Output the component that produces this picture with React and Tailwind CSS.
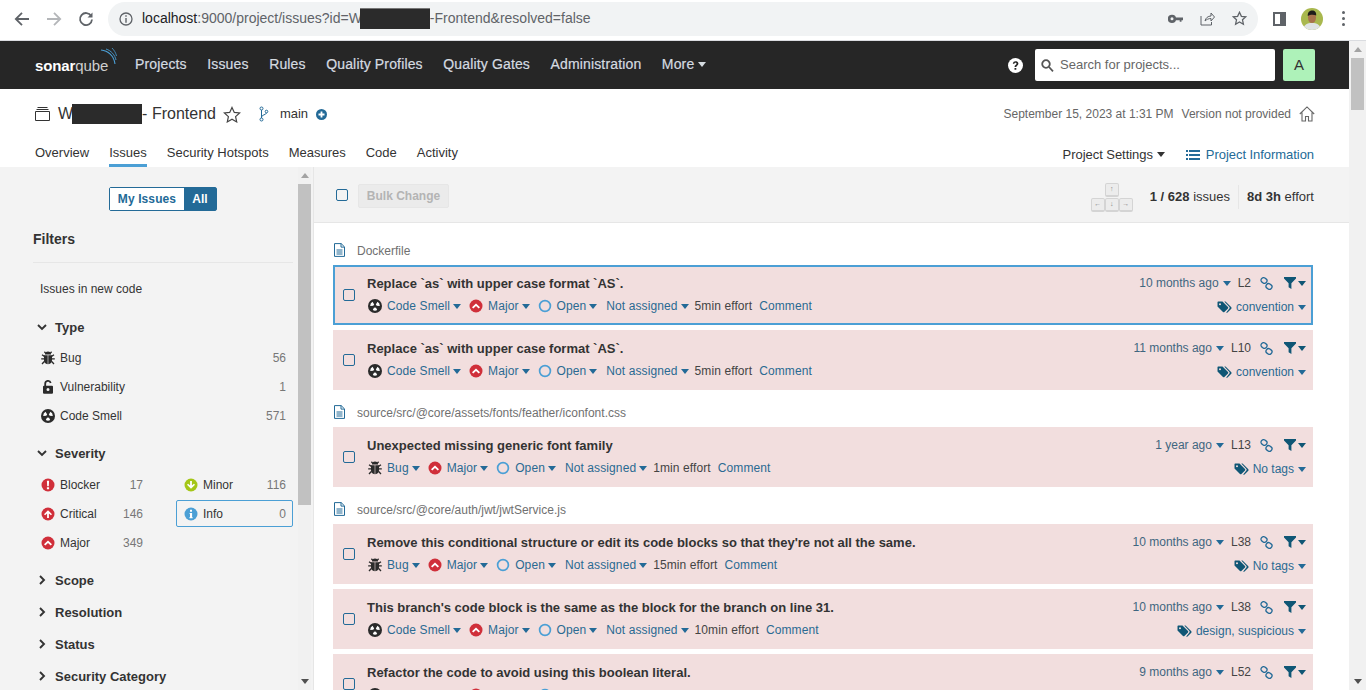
import React from 'react';

const font = { fontFamily: '"Liberation Sans", Arial, sans-serif' };

function Caret({ className = 'text-[#236a97]' }) {
  return (
    <svg width="8" height="5" viewBox="0 0 8 5" className={`shrink-0 ${className}`}>
      <path d="M0 0h8L4 5z" fill="currentColor" />
    </svg>
  );
}

function BugIcon({ size = 14 }) {
  return (
    <svg width={size} height={size} viewBox="0 0 14 14" className="shrink-0">
      <g fill="#2b2b2b">
        <path d="M4 3.600a3 3 0 0 1 6 0z" />
        <path d="M3 4.200h3.700v9C4.400 12.900 3 11.400 3 9.200zM7.300 4.200H11v5c0 2.200-1.400 3.700-3.700 4z" />
      </g>
      <g stroke="#2b2b2b" strokeWidth="1.300" fill="none">
        <path d="M3.400.8l1.600 1.800M10.600.8L9 2.600M3.400 5.400L1 3.800M10.600 5.400L13 3.800M3.200 7.800H.2M10.800 7.800h3M3.600 10.200L1 13M10.400 10.200L13 13" />
      </g>
    </svg>
  );
}

function LockIcon() {
  return (
    <svg width="14" height="14" viewBox="0 0 14 14" className="shrink-0">
      <path d="M4.200 6.500V3.800a2.800 2.800 0 0 1 5.500-.8" stroke="#2b2b2b" strokeWidth="1.800" fill="none" />
      <path fillRule="evenodd" d="M3 5.800h8a1 1 0 0 1 1 1v6a1 1 0 0 1-1 1H3a1 1 0 0 1-1-1v-6a1 1 0 0 1 1-1zm4 2.200a1.500 1.500 0 1 0 0 3 1.500 1.500 0 0 0 0-3z" fill="#2b2b2b" />
    </svg>
  );
}

function SmellIcon() {
  return (
    <svg width="14" height="14" viewBox="0 0 14 14" className="shrink-0">
      <circle cx="7" cy="7" r="7" fill="#2b2b2b" />
      <g transform="rotate(180 7 7)">
        <path d="M5.400 7.200L2.200 6.900a4.900 4.900 0 0 0 2.300 4.300l1.700-2.700a1.800 1.800 0 0 1-.8-1.300z" fill="#fff" />
        <path d="M8.600 7.200l3.200-.3a4.900 4.900 0 0 1-2.300 4.300L7.800 8.500a1.800 1.800 0 0 0 .8-1.300z" fill="#fff" />
        <path d="M4.800 2.900a4.800 4.800 0 0 1 4.400 0L7.900 5.600a2 2 0 0 0-1.800 0z" fill="#fff" />
      </g>
    </svg>
  );
}

function MajorIcon() {
  return (
    <svg width="14" height="14" viewBox="0 0 14 14" className="shrink-0">
      <circle cx="7" cy="7" r="6.500" fill="#d02f3a" />
      <path d="M3 8.200L7 4.400l4 3.800-1.300 1.300L7 7 4.300 9.500z" fill="#fff" />
    </svg>
  );
}

function CriticalIcon() {
  return (
    <svg width="14" height="14" viewBox="0 0 14 14" className="shrink-0">
      <circle cx="7" cy="7" r="6.500" fill="#d02f3a" />
      <path d="M7 3.200l4 4-1.100 1.100-2-1.900V11H6.100V6.400l-2 1.900L3 7.200z" fill="#fff" />
    </svg>
  );
}

function BlockerIcon() {
  return (
    <svg width="14" height="14" viewBox="0 0 14 14" className="shrink-0">
      <circle cx="7" cy="7" r="6.500" fill="#d02f3a" />
      <path d="M5.900 2.800h2.200L7.800 8.200H6.200zM5.900 9.300h2.200v2H5.900z" fill="#fff" />
    </svg>
  );
}

function MinorIcon() {
  return (
    <svg width="14" height="14" viewBox="0 0 14 14" className="shrink-0">
      <circle cx="7" cy="7" r="6.500" fill="#a4c617" />
      <path d="M7 10.800l-4-4 1.100-1.100 2 1.900V3h1.800v4.600l2-1.900L11 6.800z" fill="#fff" />
    </svg>
  );
}

function InfoIcon() {
  return (
    <svg width="14" height="14" viewBox="0 0 14 14" className="shrink-0">
      <circle cx="7" cy="7" r="6.500" fill="#4b9fd5" />
      <path d="M6 2.800h2v1.900H6zM5.600 6h2.500v4.200h.6v1.100H5.400v-1.100H6V7.100h-.4z" fill="#fff" />
    </svg>
  );
}

function OpenIcon() {
  return (
    <svg width="14" height="14" viewBox="0 0 14 14" className="shrink-0">
      <circle cx="7" cy="7" r="5.400" stroke="#4b9fd5" strokeWidth="1.700" fill="none" />
    </svg>
  );
}

function TypeIcon({ type }) {
  return type === 'Bug' ? <BugIcon /> : <SmellIcon />;
}

function LinkIcon() {
  return (
    <svg width="13" height="13" viewBox="0 0 13 13" className="shrink-0">
      <g stroke="#236a97" strokeWidth="1.300" fill="none">
        <rect x="1" y="1" width="6" height="5" rx="2.300" transform="rotate(35 4 3.500)" />
        <rect x="6" y="7" width="6" height="5" rx="2.300" transform="rotate(35 9 9.500)" />
      </g>
    </svg>
  );
}

function FilterIcon() {
  return (
    <svg width="12" height="12" viewBox="0 0 12 12" className="shrink-0">
      <path d="M0 0h12v1.400L7.400 6.200V12L4.600 10.300V6.200L0 1.400z" fill="#0f5675" />
    </svg>
  );
}

function TagIcon() {
  return (
    <svg width="15" height="13" viewBox="0 0 15 13" className="shrink-0">
      <path fillRule="evenodd" d="M.5 1.200A.7.700 0 0 1 1.200.5h4.300L11 6c.4.4.4 1 0 1.400L7.400 11c-.4.4-1 .4-1.400 0L.5 5.500zM3 2.200a1 1 0 1 0 0 2 1 1 0 0 0 0-2z" fill="#0f5675" />
      <path d="M7.300.5h1.200l5.800 5.800c.4.4.4 1 0 1.400l-3.800 3.800c-.4.4-.9.4-1.300.1L12.400 7.500c.4-.4.4-1 0-1.400z" fill="#0f5675" />
    </svg>
  );
}

function FileIcon() {
  return (
    <svg width="13" height="14" viewBox="0 0 13 14" className="shrink-0">
      <path d="M1.500.6h6.700l3.300 3.300v9.500H1.500z M8 .6v3.500h3.500 M3.500 7h6 M3.500 9h6 M3.500 11h6" stroke="#236a97" strokeWidth="1" fill="none" />
    </svg>
  );
}

function Chevron({ open }) {
  return (
    <svg width="10" height="10" viewBox="0 0 10 10" className="shrink-0">
      {open
        ? <path d="M1 3l4 4 4-4" stroke="#333" strokeWidth="1.900" fill="none" />
        : <path d="M3 1l4 4-4 4" stroke="#333" strokeWidth="1.900" fill="none" />}
    </svg>
  );
}

function Checkbox() {
  return <div className="w-[12px] h-[12px] shrink-0 border border-[#236a97] rounded-[2px]" />;
}

function Meta({ icon, label, className = '' }) {
  return (
    <span className={`flex items-center ${className}`}>
      {icon && <span className="mr-[5px] flex">{icon}</span>}
      <span className="text-[#2a6a92]">{label}</span>
      <span className="ml-[3px] flex"><Caret /></span>
    </span>
  );
}

function IssueBox({ issue }) {
  const { title, type, open = 'Open', effort, age, line, tags, selected } = issue;
  return (
    <div className={`h-[60px] mb-[5px] bg-[#f2dede] border-2 flex items-center pl-[8px] pr-[5px] ${selected ? 'border-[#4b9fd5]' : 'border-[#f2dede]'}`}>
      <Checkbox />
      <div className="ml-[12px] flex-1 min-w-0">
        <div className="h-[20px] leading-[20px] text-[13px] font-bold text-[#333]">{title}</div>
        <div className="h-[20px] mt-[2px] pl-[1px] flex items-center gap-[8px] text-[12px] tracking-[0.1px]">
          <Meta icon={<TypeIcon type={type} />} label={type} />
          <Meta icon={<MajorIcon />} label="Major" />
          <Meta icon={<OpenIcon />} label={open} />
          <Meta label="Not assigned" className="ml-[1px]" />
          <span className="text-[#444] -ml-[2px]">{effort} effort</span>
          <span className="text-[#2a6a92] -ml-[1px]">Comment</span>
        </div>
      </div>
      <div className="text-[12px] flex flex-col items-end">
        <div className="h-[20px] flex items-center">
          <span className="text-[#3f6680]">{age}</span>
          <span className="ml-[4px] flex"><Caret /></span>
          <span className="ml-[7px] mr-[9px] text-[#444]">{line}</span>
          <LinkIcon />
          <span className="ml-[11px] flex"><FilterIcon /></span>
          <span className="ml-[2px] flex"><Caret className="text-[#0f5675]" /></span>
        </div>
        <div className="h-[20px] mt-[4px] flex items-center">
          <TagIcon />
          <span className="ml-[4px] text-[#2a6a92]">{tags}</span>
          <span className="ml-[4px] flex"><Caret /></span>
        </div>
      </div>
    </div>
  );
}

function FilePath({ path, first }) {
  return (
    <div className={`h-[18px] mb-[6px] flex items-center gap-[11px] text-[12px] text-[#707070] ${first ? '' : 'mt-[13px]'}`}>
      <FileIcon />
      <span className="pt-[1px]">{path}</span>
    </div>
  );
}

function FacetHeader({ label, open, className }) {
  return (
    <div className={`h-[24px] flex items-center pl-[37px] text-[13px] font-bold text-[#333] ${className}`}>
      <Chevron open={open} />
      <span className="ml-[8px] pt-[1px]">{label}</span>
    </div>
  );
}

function FacetRow({ icon, label, count, highlighted }) {
  return (
    <div className={`h-[29px] flex items-center justify-between text-[12px] pl-[8px] pr-[7px] ${highlighted ? 'relative' : ''}`}>
      {highlighted && <div className="absolute left-0 right-0 top-[1px] bottom-[1px] border border-[#4b9fd5] rounded-[2px]" />}
      <span className="flex items-center gap-[5px] text-[#333]">{icon}{label}</span>
      <span className="text-[#777]">{count}</span>
    </div>
  );
}

function Scrollbar({ thumbTop, thumbHeight, width = 'w-[13px]', thumbClass = 'w-full' }) {
  return (
    <div className={`${width} shrink-0 h-full flex flex-col items-center bg-[#f1f1f1] relative`}>
      <svg width="8" height="5" viewBox="0 0 8 5" className="absolute top-[6px]"><path d="M0 5h8L4 0z" fill="#a3a3a3" /></svg>
      <div className={`absolute bg-[#c1c1c1] ${thumbClass}`} style={{ top: thumbTop, height: thumbHeight }} />
      <svg width="8" height="5" viewBox="0 0 8 5" className="absolute bottom-[6px]"><path d="M0 0h8L4 5z" fill="#505050" /></svg>
    </div>
  );
}

function ChromeBar() {
  return (
    <div className="h-[41px] bg-white border-b border-[#dadce0] flex items-center pb-[3px]">
      <div className="w-[108px] flex items-center shrink-0">
        <svg width="16" height="16" viewBox="0 0 16 16" className="ml-[14px]"><path d="M15 8H2.500M8 1.800L1.800 8 8 14.200" stroke="#5f6368" strokeWidth="1.800" fill="none" /></svg>
        <svg width="16" height="16" viewBox="0 0 16 16" className="ml-[16px]"><path d="M1 8h12.500M8 1.800L14.200 8 8 14.200" stroke="#b4b6b9" strokeWidth="1.800" fill="none" /></svg>
        <svg width="16" height="16" viewBox="0 0 16 16" className="ml-[16px]"><path d="M13.200 5A6 6 0 1 0 14 8.500" stroke="#5f6368" strokeWidth="1.800" fill="none" /><path d="M14.500 1.500V6.500H9.500z" fill="#5f6368" /></svg>
      </div>
      <div className="w-[1150px] h-[34px] rounded-full bg-[#f1f3f4] flex items-center pl-[11px] pr-[11px] shrink-0">
        <svg width="14" height="14" viewBox="0 0 14 14" className="shrink-0">
          <circle cx="7" cy="7" r="6" stroke="#5f6368" strokeWidth="1.300" fill="none" />
          <path d="M6.300 3.300h1.400v1.400H6.300zM6.300 6h1.400v4.700H6.300z" fill="#5f6368" />
        </svg>
        <div className="ml-[9px] flex items-center text-[14px] text-[#5f6368] whitespace-nowrap flex-1">
          <span className="text-[#202124]">localhost</span>:9000/project/issues?id=W
          <span className="inline-block w-[70px] h-[21px] bg-[#2b2b2b] border-t border-[#777] -ml-[2px]" />
          -Frontend&amp;resolved=false
        </div>
        <div className="flex items-center gap-[17px]">
          <svg width="15" height="10" viewBox="0 0 15 10">
            <path fillRule="evenodd" d="M4 .8a4 4 0 1 1-.1 8.200 4 4 0 0 1 .1-8.200zm0 2.500a1.500 1.500 0 1 0 0 3 1.500 1.500 0 0 0 0-3z" fill="#5f6368" />
            <path d="M7 3.500h8v2.800h-1.500v1.500h-1.800V6.300H7z" fill="#5f6368" />
          </svg>
          <svg width="15" height="15" viewBox="0 0 15 15" fill="none" stroke="#5f6368" strokeWidth="1">
            <path d="M1 5v9h10.500v-3M5 10c.5-3 3-5 6-5V2l3.500 4-3.500 4V7.500c-2.500 0-4.500 1-6 2.500z" />
          </svg>
          <svg width="15" height="15" viewBox="0 0 15 15" fill="none" stroke="#5f6368" strokeWidth="1.300">
            <path d="M7.500 1.300l1.900 4 4.400.5-3.300 3 .9 4.400-3.900-2.200-3.900 2.200.9-4.400-3.300-3 4.400-.5z" />
          </svg>
        </div>
      </div>
      <div className="flex-1 flex items-center">
        <div className="ml-[15px] w-[13px] h-[14px] border-2 border-[#5f6368] border-r-[6px]" />
        <svg width="22" height="22" viewBox="0 0 22 22" className="ml-[15px]">
          <defs><clipPath id="av"><circle cx="11" cy="11" r="11" /></clipPath></defs>
          <g clipPath="url(#av)">
            <rect width="22" height="22" fill="#a9b84e" />
            <path d="M2 23c0-6 4-8 9-8s9 2 9 8z" fill="#dfe3e4" />
            <ellipse cx="11" cy="9.500" rx="4" ry="5.500" fill="#a8724d" />
            <path d="M6.800 8c-.3-4 2-5.500 4.500-5.500S15.500 4 15.200 7.500C13 6.500 9 6.500 6.800 8z" fill="#1f1c1a" />
          </g>
        </svg>
        <div className="ml-[19px] flex flex-col gap-[3px]">
          <div className="w-[3px] h-[3px] rounded-full bg-[#5f6368]" />
          <div className="w-[3px] h-[3px] rounded-full bg-[#5f6368]" />
          <div className="w-[3px] h-[3px] rounded-full bg-[#5f6368]" />
        </div>
      </div>
    </div>
  );
}

function NavBar() {
  const links = ['Projects', 'Issues', 'Rules', 'Quality Profiles', 'Quality Gates', 'Administration'];
  return (
    <div className="h-[48px] bg-[#262626] flex items-center pl-[35px] pr-[34px]">
      <div className="w-[100px] shrink-0 flex items-center relative pt-[2px]">
        <span className="text-[15px] font-bold text-white tracking-[-0.1px]">sonar</span>
        <span className="text-[15px] text-[#cfcfcf] tracking-[-0.1px]">qube</span>
        <svg width="20" height="20" viewBox="0 0 20 20" className="absolute left-[65px] -top-[6px]" fill="none" stroke="#4b9fd5">
          <path d="M1 3c7 .5 13 6 14 14" strokeWidth="1.100" />
          <path d="M6 2c5 1.500 9 6 10 11" strokeWidth="0.900" />
          <path d="M12 1c2 2 4 5 4.500 8" strokeWidth="0.800" />
        </svg>
      </div>
      <div className="flex items-center gap-[20.5px] pb-[1px] text-[14px] tracking-[0.15px] text-[#d5dbe0] whitespace-nowrap [-webkit-text-stroke:0.2px_#d5dbe0]">
        {links.map(l => <span key={l}>{l}</span>)}
        <span className="flex items-center gap-[4px]">More <Caret className="text-[#d5dbe0]" /></span>
      </div>
      <div className="ml-auto flex items-center">
        <svg width="15" height="15" viewBox="0 0 15 15">
          <circle cx="7.500" cy="7.500" r="7.500" fill="#fff" />
          <path d="M4.800 5.700C5 4 6.200 3.200 7.600 3.200c1.600 0 2.800 1 2.800 2.400 0 2-2.100 2.100-2.100 3.500H6.500c0-2.200 2-2.300 2-3.400 0-.6-.4-1-1-1-.7 0-1 .4-1.100 1zM6.500 9.900h1.800v1.800H6.500z" fill="#262626" />
        </svg>
        <div className="ml-[12px] w-[240px] h-[32px] bg-white rounded-[2px] flex items-center pl-[6px] text-[13px] text-[#666]">
          <svg width="13" height="13" viewBox="0 0 13 13" fill="none" stroke="#555" strokeWidth="1.800" className="mr-[6px]">
            <circle cx="5" cy="5" r="3.800" />
            <path d="M8 8l4 4.300" />
          </svg>
          Search for projects...
        </div>
        <div className="ml-[8px] w-[32px] h-[32px] rounded-[2px] bg-[#aef2b9] flex items-center justify-center text-[15px] text-[#333]">A</div>
      </div>
    </div>
  );
}

function ProjectHeader() {
  const tabs = ['Overview', 'Issues', 'Security Hotspots', 'Measures', 'Code', 'Activity'];
  return (
    <div className="h-[78px] bg-white pl-[35px] pr-[34px] relative">
      <div className="h-[50px] flex items-center">
        <svg width="15" height="14" viewBox="0 0 15 14" fill="none" stroke="#333" strokeWidth="1">
          <path d="M2.500.5h10M1.500 2.500h12M.5 4.500h14v9H.5z" />
        </svg>
        <span className="ml-[8px] text-[16px] text-[#333] whitespace-nowrap flex items-center">
          W<span className="inline-block w-[70px] h-[20px] bg-[#2b2b2b] -ml-[1px]" />- Frontend
        </span>
        <svg width="18" height="17" viewBox="0 0 18 17" fill="none" stroke="#444" strokeWidth="1.200" className="ml-[7px]">
          <path d="M9 1.500l2.300 4.900 5.300.6-4 3.600 1.100 5.300L9 13.200l-4.700 2.700 1.100-5.300-4-3.600 5.300-.6z" />
        </svg>
        <svg width="10" height="16" viewBox="0 0 10 16" fill="none" stroke="#236a97" strokeWidth="1" className="ml-[18px]">
          <circle cx="2.500" cy="2.500" r="1.500" /><circle cx="2.500" cy="13.500" r="1.500" /><circle cx="7.500" cy="5.500" r="1.300" />
          <path d="M2.500 4v8M7.500 7C7 9 3 8.500 2.500 11" />
        </svg>
        <span className="ml-[11px] text-[13px] text-[#333]">main</span>
        <svg width="11" height="11" viewBox="0 0 11 11" className="ml-[8px]">
          <circle cx="5.500" cy="5.500" r="5.500" fill="#236a97" />
          <path d="M4.600 2.500h1.800v2.100h2.100v1.800H6.400v2.100H4.600V6.400H2.500V4.600h2.100z" fill="#fff" />
        </svg>
        <div className="ml-auto flex items-center text-[12px] text-[#666] whitespace-nowrap">
          <span>September 15, 2023 at 1:31 PM</span>
          <span className="ml-[8px]">Version not provided</span>
          <svg width="16" height="16" viewBox="0 0 16 16" fill="none" stroke="#666" strokeWidth="1.100" className="ml-[8px]">
            <path d="M.8 8L8 .9 15.200 8M3 6.500v8.500h3.500v-4.500h3V15H13V6.500" />
          </svg>
        </div>
      </div>
      <div className="flex items-start justify-between h-[28px] pr-[1px]">
        <div className="flex items-start gap-[20px] text-[13px] text-[#333]">
          {tabs.map(t => (
            <span key={t} className={`h-[28px] pt-[4px] ${t === 'Issues' ? 'border-b-[3px] border-[#4b9fd5]' : ''}`}>{t}</span>
          ))}
        </div>
        <div className="flex items-center text-[13px] pt-[5px] tracking-[-0.05px]">
          <span className="text-[#333] flex items-center gap-[4px]">Project Settings <Caret className="text-[#333]" /></span>
          <svg width="14" height="12" viewBox="0 0 14 12" className="ml-[21px] mt-[2px]" fill="#236a97">
            <path d="M0 1h2v2H0zM3 1h11v2H3zM0 5h2v2H0zM3 5h11v2H3zM0 9h2v2H0zM3 9h11v2H3z" />
          </svg>
          <span className="ml-[6px] mt-[1px] text-[#236a97]">Project Information</span>
        </div>
      </div>
    </div>
  );
}

function Sidebar() {
  return (
    <div className="w-[314px] shrink-0 h-full bg-[#f3f3f3] border-r border-[#e6e6e6] flex">
      <div className="w-[298px] shrink-0 overflow-hidden">
        <div className="pt-[20px] flex justify-center pl-[28px]">
          <div className="h-[24px] flex text-[12px] font-bold border border-[#236a97] rounded-[2px] tracking-[0.1px]">
            <span className="w-[74px] flex items-center justify-center bg-white text-[#236a97]">My Issues</span>
            <span className="w-[32px] flex items-center justify-center bg-[#236a97] text-white">All</span>
          </div>
        </div>
        <div className="mt-[18px] h-[20px] pl-[33px] text-[14px] leading-[20px] font-bold text-[#333]">Filters</div>
        <div className="mt-[13px] ml-[33px] w-[260px] h-[1px] bg-[#e6e6e6]" />
        <div className="mt-[16px] h-[18px] pl-[40px] text-[12px] leading-[18px] pt-[1px] text-[#333]">Issues in new code</div>
        <FacetHeader label="Type" open className="mt-[18px]" />
        <div className="mt-[4px] ml-[33px] w-[260px]">
          <FacetRow icon={<BugIcon />} label="Bug" count="56" />
          <FacetRow icon={<LockIcon />} label="Vulnerability" count="1" />
          <FacetRow icon={<SmellIcon />} label="Code Smell" count="571" />
        </div>
        <FacetHeader label="Severity" open className="mt-[11px]" />
        <div className="mt-[5px] ml-[33px] w-[260px] grid grid-cols-[117px_117px] gap-x-[26px]">
          <FacetRow icon={<BlockerIcon />} label="Blocker" count="17" />
          <FacetRow icon={<MinorIcon />} label="Minor" count="116" />
          <FacetRow icon={<CriticalIcon />} label="Critical" count="146" />
          <FacetRow icon={<InfoIcon />} label="Info" count="0" highlighted />
          <FacetRow icon={<MajorIcon />} label="Major" count="349" />
        </div>
        <FacetHeader label="Scope" className="mt-[11px]" />
        <FacetHeader label="Resolution" className="mt-[8px]" />
        <FacetHeader label="Status" className="mt-[8px]" />
        <FacetHeader label="Security Category" className="mt-[8px]" />
      </div>
      <Scrollbar thumbTop={17} thumbHeight={321} />
    </div>
  );
}

function Key({ children }) {
  return (
    <span className="w-[14px] h-[14px] flex items-center justify-center rounded-[2px] bg-[#ececec] border border-[#d4d4d4] border-b-2 text-[7px] text-[#888]">{children}</span>
  );
}

function BulkBar() {
  return (
    <div className="h-[56px] bg-[#f3f3f3] border-b border-[#e6e6e6] flex items-center pl-[22px] pr-[35px]">
      <Checkbox />
      <button className="ml-[10px] mt-[2px] h-[24px] w-[91px] rounded-[2px] border border-[#e6e6e6] bg-[#ebebeb] text-[12px] font-bold text-[#b4b4b4]">Bulk Change</button>
      <div className="ml-auto flex items-center text-[13px] text-[#333] pt-[5px]">
        <div className="flex flex-col items-center gap-[1px] mr-[17px]">
          <Key>↑</Key>
          <div className="flex"><Key>←</Key><Key>↓</Key><Key>→</Key></div>
        </div>
        <span><b>1 / 628</b> issues</span>
        <span className="mx-[8px] w-[1px] h-[24px] bg-[#e6e6e6]" />
        <span><b>8d 3h</b> effort</span>
      </div>
    </div>
  );
}

const smell = { type: 'Code Smell' };
const bug = { type: 'Bug' };

function Main() {
  return (
    <div className="flex-1 min-w-0 h-full bg-white overflow-hidden">
      <BulkBar />
      <div className="pl-[19px] pr-[36px] pt-[18px]">
        <FilePath path="Dockerfile" first />
        <IssueBox issue={{ ...smell, title: 'Replace `as` with upper case format `AS`.', effort: '5min', age: '10 months ago', line: 'L2', tags: 'convention', selected: true }} />
        <IssueBox issue={{ ...smell, title: 'Replace `as` with upper case format `AS`.', effort: '5min', age: '11 months ago', line: 'L10', tags: 'convention' }} />
        <FilePath path="source/src/@core/assets/fonts/feather/iconfont.css" />
        <IssueBox issue={{ ...bug, title: 'Unexpected missing generic font family', effort: '1min', age: '1 year ago', line: 'L13', tags: 'No tags' }} />
        <FilePath path="source/src/@core/auth/jwt/jwtService.js" />
        <IssueBox issue={{ ...bug, title: "Remove this conditional structure or edit its code blocks so that they're not all the same.", effort: '15min', age: '10 months ago', line: 'L38', tags: 'No tags' }} />
        <IssueBox issue={{ ...smell, title: "This branch's code block is the same as the block for the branch on line 31.", effort: '10min', age: '10 months ago', line: 'L38', tags: 'design, suspicious' }} />
        <IssueBox issue={{ ...smell, title: 'Refactor the code to avoid using this boolean literal.', effort: '5min', age: '9 months ago', line: 'L52', tags: 'brain-overload' }} />
      </div>
    </div>
  );
}

export default function App() {
  return (
    <div className="h-[690px] overflow-hidden bg-white" style={font}>
      <ChromeBar />
      <div className="flex h-[649px]">
        <div className="w-[1349px] shrink-0 h-full flex flex-col">
          <NavBar />
          <ProjectHeader />
          <div className="flex flex-1 min-h-0">
            <Sidebar />
            <Main />
          </div>
        </div>
        <Scrollbar thumbTop={17} thumbHeight={52} width="w-[17px]" thumbClass="w-[13px]" />
      </div>
    </div>
  );
}
